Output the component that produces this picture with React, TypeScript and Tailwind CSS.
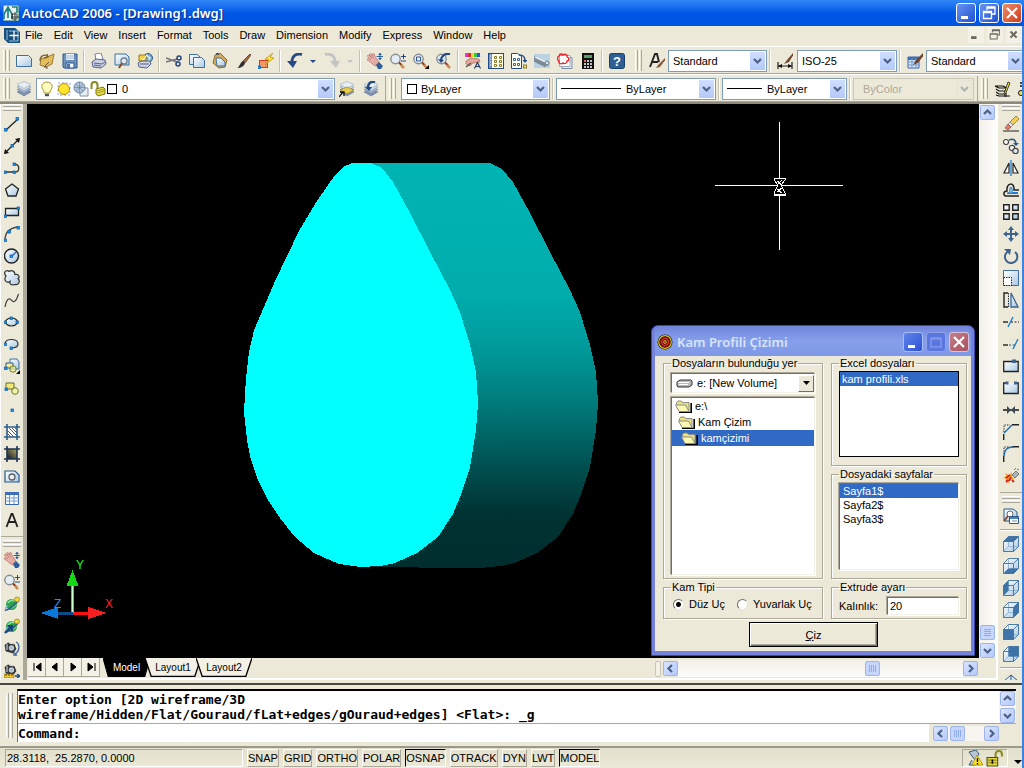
import React, { useState } from "react";
import type { ReactNode } from "react";

/* ---------- drawing helpers ---------- */

function Svg({ children, className = "size-4" }: { children: ReactNode; className?: string }) {
  return (
    <svg viewBox="0 0 16 16" className={`${className} shrink-0`} fill="none" aria-hidden="true">
      {children}
    </svg>
  );
}

function Node({ x, y }: { x: number; y: number }) {
  return <rect x={x - 1} y={y - 1} width="2.6" height="2.6" fill="#1e96f0" stroke="#0a5aa8" strokeWidth="0.7" />;
}

function Defs() {
  return (
    <svg className="absolute size-0" aria-hidden="true">
      <defs>
        <linearGradient id="glass" x1="0" y1="0" x2="1" y2="1">
          <stop offset="0" stopColor="#ffffff" />
          <stop offset="1" stopColor="#a9c8e2" />
        </linearGradient>
        <linearGradient id="camSide" x1="0" y1="163" x2="0" y2="567" gradientUnits="userSpaceOnUse">
          <stop offset="0" stopColor="#00b4b4" />
          <stop offset="0.33" stopColor="#00acac" />
          <stop offset="0.48" stopColor="#009696" />
          <stop offset="0.62" stopColor="#007474" />
          <stop offset="0.75" stopColor="#005050" />
          <stop offset="0.87" stopColor="#003232" />
          <stop offset="1" stopColor="#002e2e" />
        </linearGradient>
        <linearGradient id="dark" x1="0" y1="1" x2="1" y2="0">
          <stop offset="0" stopColor="#0b1633" />
          <stop offset="1" stopColor="#b5a55a" />
        </linearGradient>
      </defs>
    </svg>
  );
}

const page = (x: number, y: number) => (
  <path d={`M${x} ${y}h8l3 3v7h-11z`} fill="url(#glass)" stroke="#3f6f9c" />
);

const hand = (
  <>
    <path d="M5 7L1.500 3M6.500 6L3.500 1.500M8 6L6.500 1.500M5 9L1 6.500" stroke="#b8756d" strokeWidth="2.400" strokeLinecap="round" />
    <path d="M4 6l5-1 3 4-3 4c-3-1-5-3-6-5z" fill="#e3aaa2" stroke="#b8756d" strokeWidth=".8" />
    <path d="M5 7L1.500 3M6.500 6L3.500 1.500M8 6L6.500 1.500M5 9L1 6.500" stroke="#ecbab2" strokeWidth="1.200" strokeLinecap="round" />
    <path d="M9 12l3-3 4 4-2 3h-3z" fill="#2e5f98" />
    <path d="M13 0v7M9.500 3.500h6.500" stroke="#2e5f98" />
    <path d="M13 0l-2 2h4zM13 7l-2-2h4z" fill="#2e5f98" />
  </>
);

const lens = (
  <>
    <circle cx="5.500" cy="6" r="4.700" fill="#e4edf3" stroke="#878d94" strokeWidth="1.400" />
    <path d="M9 9.500l3 3" stroke="#8a3d1d" strokeWidth="2" />
    <path d="M11 12l3 3" stroke="#c98a54" strokeWidth="2.500" />
  </>
);

const stack = (
  <>
    <path d="M1 11l7-3 7 3-7 4z" fill="#7f93b0" stroke="#5c718f" strokeWidth="0.500" />
    <path d="M1 8.500l7-3 7 3-7 4z" fill="#a3b5cd" stroke="#5c718f" strokeWidth="0.500" />
    <path d="M1 6l7-3 7 3-7 4z" fill="#cfdbe8" stroke="#7487a2" strokeWidth="0.500" />
    <path d="M1 3.500l7-3 7 3-7 4z" fill="#e7eef4" stroke="#8b9db5" strokeWidth="0.500" />
  </>
);

const printer = (
  <>
    <path d="M4 1l6-1 2 6-7 2z" fill="#fff" stroke="#7680ab" />
    <path d="M1 9l4-3 9 1 1 4-5 4-8-1z" fill="#ccd1e3" stroke="#59638c" />
    <path d="M3 10l8 1 3-2M3 12l7 1" stroke="#59638c" />
  </>
);

const brush = (
  <>
    <path d="M15 1L8 8l2 2 6-8z" fill="#a46a41" stroke="#4d2c18" strokeWidth="0.700" />
    <path d="M8 8l2 2c-1 4-5 5-8 5 3-1 3-6 6-7z" fill="#2f2f33" />
  </>
);

const planet = (
  <>
    <circle cx="7.500" cy="8.500" r="5.500" fill="#2da04e" />
    <path d="M4 7c2-3 5-3 6-2M7 12c2-1 5-2 5-5" stroke="#8de09b" strokeWidth="1.700" />
    <path d="M1 14c2 1 12-6 13-10" stroke="#2b6490" strokeWidth="1.800" />
    <path d="M1 14c0-2 2-4 3-5" stroke="#7fb0cc" strokeWidth="1.200" />
    <circle cx="13" cy="3.500" r="2.500" fill="#edd33e" stroke="#9b7a13" strokeWidth="0.700" />
  </>
);

const camera = (
  <>
    <path d="M1 5l3-2 6 1 2 5-3 4-7-2z" fill="#34383e" stroke="#111" strokeWidth="0.600" />
    <circle cx="7.500" cy="8" r="2.300" fill="#a9bccb" stroke="#fff" strokeWidth="0.700" />
    <path d="M3 4v6M5 3l5 1" stroke="#dfe4e8" />
  </>
);

type Glyph = { label: string; art: ReactNode };

const cube = (face: string, label: string): Glyph => ({
  label,
  art: (
    <>
      <path d="M.5 5.500l5-5h10v10l-5 5H.500z" fill="url(#glass)" />
      <path d="M.5 15.500l5-5h10M5.500 10.500V.500" stroke="#8fb2d0" strokeWidth="0.900" />
      <path d={face} fill="#3f74a8" />
      <path d="M.5 5.500l5-5h10v10l-5 5H.500zM.500 5.500h10v10M10.500 5.500l5-5" stroke="#3d6f9f" strokeWidth="0.900" />
    </>
  ),
});

const SEP: Glyph = { label: "", art: null };

const standard: Glyph[] = [
  { label: "QNew", art: <path d="M.5 2.500h12l3 3v8H.500z" fill="url(#glass)" stroke="#3f6f9c" /> },
  {
    label: "Open",
    art: (
      <>
        <path d="M2 6l4-1 9-4-2 10-6 3-6-2z" fill="#e6bd5a" stroke="#9c7a31" />
        <path d="M1 8c0-5 4-7 7-5M8 1l1 3-4 1" stroke="#806329" strokeWidth="1.300" />
        <path d="M10 9l-5 5h3v2" stroke="#665230" />
      </>
    ),
  },
  {
    label: "Save",
    art: (
      <>
        <path d="M1 1h14v14H2l-1-1z" fill="#6c90bb" stroke="#2c568b" />
        <path d="M4 1h8v6H4z" fill="#e4eef8" />
        <path d="M4 3h8M4 5h8" stroke="#a7bdd5" />
        <path d="M4 10h8v5H4z" fill="#f4f6fa" stroke="#2c568b" />
        <path d="M5 11h3v4H5z" fill="#4b74a8" />
      </>
    ),
  },
  SEP,
  { label: "Plot", art: printer },
  {
    label: "Plot Preview",
    art: (
      <>
        <path d="M1 1h11l3 3v8H1z" fill="url(#glass)" stroke="#3f6f9c" />
        <circle cx="10" cy="8" r="3" fill="#dfe9ef" stroke="#72828e" strokeWidth="1.300" />
        <path d="M8 10l-3 5" stroke="#8d4926" strokeWidth="2" />
      </>
    ),
  },
  {
    label: "Publish",
    art: (
      <>
        <circle cx="11" cy="5" r="4.500" fill="#79acc8" stroke="#2d5c86" />
        <path d="M9 2l4 3-2 4" stroke="#d9f0ec" strokeWidth="1.500" />
        <path d="M2 2h7v6H2z" fill="#f6cd49" stroke="#a57b1c" />
        <path d="M4 5l2 2 4-5" stroke="#fff" />
        <path d="M1 10l3-2h9l1 3-4 4-8-1z" fill="#ccd1e3" stroke="#59638c" />
        <path d="M3 11h9" stroke="#59638c" />
      </>
    ),
  },
  SEP,
  {
    label: "Cut",
    art: (
      <>
        <path d="M0 5l11 4M0 9l11-3" stroke="#71757b" strokeWidth="1.400" />
        <circle cx="13" cy="5" r="2" stroke="#25427b" strokeWidth="1.500" />
        <circle cx="12" cy="11" r="2" stroke="#25427b" strokeWidth="1.500" />
      </>
    ),
  },
  { label: "Copy", art: <>{page(0.5, 1.5)}{page(4.5, 4.5)}</> },
  {
    label: "Paste",
    art: (
      <>
        <path d="M3 2l5-2 7 7-2 7-6 1-6-5z" fill="#d5ac5d" stroke="#91692b" />
        <path d="M4 5h5l4 4v4H5z" fill="url(#glass)" stroke="#3f6f9c" />
        <path d="M4 1h3" stroke="#555" strokeWidth="2" />
      </>
    ),
  },
  { label: "Match Properties", art: brush },
  {
    label: "Block Editor",
    art: (
      <>
        <rect x="1.500" y="7.500" width="8" height="7" fill="#f29863" stroke="#cf3a20" />
        <path d="M15 0L7 6l4 1-4 5 9-7-4-1z" fill="#ffe438" stroke="#b28a18" strokeWidth="0.700" />
        <Node x={1} y={14} />
      </>
    ),
  },
  SEP,
  { label: "Undo", art: <><path d="M15 1.500C9 0 5 3 5 9" stroke="#234a84" strokeWidth="2.800" /><path d="M0 8h10l-4 7z" fill="#234a84" /></> },
  { label: "Undo list", art: <path d="M5 7h6l-3 3z" fill="#234a84" /> },
  { label: "Redo", art: <><path d="M1 1.500c6-1.500 10 1.500 10 7.500" stroke="#c2c3c3" strokeWidth="2.800" /><path d="M6 8h10l-4 7z" fill="#c2c3c3" /></> },
  { label: "Redo list", art: <path d="M5 7h6l-3 3z" fill="#c2c3c3" /> },
  SEP,
  { label: "Pan Realtime", art: hand },
  { label: "Zoom Realtime", art: <>{lens}<path d="M13.500 1v5M11 3.500h5M11 8h5" stroke="#234a84" /></> },
  { label: "Zoom Window", art: <>{lens}<path d="M3.500 4h4v4h-4z" stroke="#2c568b" /><path d="M16 12v4h-4z" fill="#000" /></> },
  { label: "Zoom Previous", art: <>{lens}<path d="M14 1C9 0 5 3 5 8" stroke="#234a84" strokeWidth="2.200" /><path d="M2 6l3 4 3-3z" fill="#234a84" /></> },
  SEP,
  {
    label: "Properties",
    art: (
      <>
        <path d="M0 0h3v4H0z" fill="#e23ad0" /><path d="M3 0h3v4H3z" fill="#e32a26" /><path d="M6 0h3v4H6z" fill="#f2df22" />
        <path d="M9 0h3v4H9z" fill="#33c93c" /><path d="M12 0h3v4h-3z" fill="#2a55dd" />
        <path d="M1 8l5-3 8 1 1 3-7 1-3 3-4-2z" fill="#e1a79d" stroke="#a86a61" strokeWidth="0.700" />
        <path d="M1 14l5-4" stroke="#555" strokeWidth="1.500" />
        <path d="M9.500 15.500l3-6 3 6M10.500 13.500h4" stroke="#1f3b66" strokeWidth="1.200" />
      </>
    ),
  },
  {
    label: "DesignCenter",
    art: (
      <>
        <rect x=".5" y=".5" width="15" height="15" fill="#fffef2" stroke="#234a84" />
        <path d="M1 1h3v14H1z" fill="#6f95c0" />
        <path d="M2 3h1M2 6h1M2 9h1M2 12h1" stroke="#fff" />
        <path d="M6.500 3.500h2v2h-2zM11.500 3.500h2v2h-2zM6.500 7.500h2v2h-2zM11.500 7.500h2v2h-2zM6.500 11.500h2v2h-2zM11.500 11.500h2v2h-2z" stroke="#8a7a24" />
      </>
    ),
  },
  {
    label: "Tool Palettes",
    art: (
      <>
        <path d="M.5.5h6l4 3v12H.500z" fill="#fffef2" stroke="#234a84" />
        <path d="M2.500 5.500h2v2h-2zM6.500 5.500h2v2h-2zM2.500 10.500h2v2h-2zM6.500 10.500h2v2h-2z" stroke="#3a659c" />
        <path d="M8 2c5 0 6 2 6 6" stroke="#234a84" strokeWidth="1.600" /><path d="M11.500 7h5L14 10z" fill="#234a84" />
        <rect x="12.500" y="12" width="3" height="3" fill="#f5e58a" stroke="#8a7a24" />
      </>
    ),
  },
  {
    label: "Sheet Set Manager",
    art: (
      <>
        <path d="M0 1h16v14H0z" fill="#b9d3e3" /><path d="M0 4l14 8M0 7l12 6" stroke="#7d8a94" strokeWidth="3" />
        <path d="M1 4l13 6" stroke="#e9eef0" strokeWidth="1.500" /><circle cx="13" cy="10" r="2" fill="#dfe5e8" stroke="#6b7780" />
      </>
    ),
  },
  {
    label: "Markup Set Manager",
    art: (
      <>
        <path d="M5 4.500h10v11H5z" fill="#e3ecf6" stroke="#7b8ea8" /><path d="M2.500 2.500h10.500v11H2.500z" fill="#fff" stroke="#9caabd" />
        <path d="M2 3c1-3 3-2 4-1 2-2 5 0 4 2 3 1 2 4 0 4 0 3-3 3-4 2-2 2-5 0-4-2-2-1-2-4 0-5z" stroke="#e8222b" strokeWidth="1.300" />
      </>
    ),
  },
  {
    label: "QuickCalc",
    art: (
      <>
        <rect x="2" y="0" width="12" height="16" fill="#111" /><rect x="4" y="2" width="8" height="3" fill="#5c9c68" />
        <path d="M4 8h8M4 11h8M4 14h8" stroke="#fff" strokeWidth="1.600" strokeDasharray="2 1" />
        <path d="M4 8h2" stroke="#e44" strokeWidth="1.600" />
      </>
    ),
  },
  SEP,
  {
    label: "Help",
    art: (
      <>
        <rect x=".5" y=".5" width="15" height="15" rx="2" fill="#2d5f94" stroke="#173f6d" />
        <text x="8" y="13" textAnchor="middle" fontSize="13" fontWeight="700" fill="#fff" fontFamily="Liberation Sans, sans-serif">?</text>
      </>
    ),
  },
];

const draw: Glyph[] = [
  { label: "Line", art: <><path d="M2 14L14 3" stroke="#222" strokeWidth="1.300" /><Node x={1.5} y={13.5} /><Node x={13} y={2.500} /></> },
  { label: "Construction Line", art: <><path d="M1 15L15 1" stroke="#222" strokeWidth="1.300" /><path d="M0 16l1-5 4 4zM16 0l-1 5-4-4z" fill="#111" /><Node x={8} y={7.500} /></> },
  { label: "Polyline", art: <><path d="M1 12h10c5 0 5-7 0-8" stroke="#333" strokeWidth="1.300" /><Node x={1} y={12} /><Node x={10} y={12} /><Node x={10} y={4} /></> },
  { label: "Polygon", art: <path d="M8 2l6.500 5-2.500 7H4L1.500 7z" fill="url(#glass)" stroke="#222" strokeWidth="1.300" /> },
  { label: "Rectangle", art: <><path d="M1.500 4.500h13v7h-13z" fill="url(#glass)" stroke="#222" strokeWidth="1.300" /><Node x={1} y={12} /><Node x={14} y={4} /></> },
  { label: "Arc", art: <><path d="M1 14C1 7 5 2 14 1" stroke="#444" strokeWidth="1.300" /><Node x={1} y={14} /><Node x={5} y={5.500} /><Node x={14} y={1.500} /></> },
  { label: "Circle", art: <><circle cx="7.500" cy="8" r="7" fill="url(#glass)" stroke="#222" strokeWidth="1.400" /><path d="M8 8l4-4" stroke="#1e6eb4" strokeWidth="1.400" /><Node x={7} y={8} /></> },
  { label: "Revision Cloud", art: <path d="M2 6C-1 3 2-1 5 1.500c3-2 6 0 6 3 4-1 5 3 3 4 3 3 0 7-3 6-3 1-6 0-5-3-3 2-7-1-4-5.500z" fill="url(#glass)" stroke="#333" strokeWidth="1.200" /> },
  { label: "Spline", art: <path d="M1 15c1-6 3-9 5-8s2 4 5 2c3-2 2-6 4-7" stroke="#444" strokeWidth="1.200" /> },
  { label: "Ellipse", art: <><ellipse cx="7.500" cy="8" rx="6" ry="4" fill="url(#glass)" stroke="#222" strokeWidth="1.200" /><Node x={1} y={8} /><Node x={7} y={4} /><Node x={13} y={8} /></> },
  { label: "Ellipse Arc", art: <><path d="M1 8c0-6 13-6 13 0 0 3-3 4-7 4" fill="url(#glass)" stroke="#333" strokeWidth="1.200" /><Node x={1} y={8} /><Node x={7} y={12} /></> },
  { label: "Insert Block", art: <><path d="M6 1h7l2 3v7H6z" fill="url(#glass)" stroke="#3f6f9c" /><path d="M2 5h7v5H2z" fill="#f6ee9d" stroke="#27598c" /><circle cx="9" cy="11" r="3.200" fill="#f6ee9d" fillOpacity=".7" stroke="#6c7c28" /><Node x={1.500} y={10} /><path d="M16 12v4h-4z" fill="#000" /></> },
  { label: "Make Block", art: <><path d="M2 3h8v6H2z" fill="#f4e877" stroke="#5c6a2a" /><circle cx="11" cy="11" r="3.300" fill="#f6ee9d" fillOpacity=".7" stroke="#6c7c28" /><Node x={2} y={9} /></> },
  { label: "Point", art: <Node x={8} y={8} /> },
  { label: "Hatch", art: <><path d="M3 3h10v10H3z" fill="#fff" /><path d="M3 6l7 7M3 9l4 4M5 4l8 8M8 4l5 5M11 4l2 2" stroke="#333" strokeWidth=".8" /><path d="M0 3h16M0 13h16M3 0v16M13 0v16" stroke="#2c5f8c" strokeWidth="1.600" /></> },
  { label: "Gradient", art: <><path d="M3 3h10v10H3z" fill="url(#dark)" /><path d="M0 3h16M0 13h16M3 0v16M13 0v16" stroke="#1c3550" strokeWidth="1.600" /></> },
  { label: "Region", art: <><path d="M1 3h10l4 4v7H1z" fill="url(#glass)" stroke="#27598c" strokeWidth="1.200" /><circle cx="8" cy="9" r="3" fill="#eee" stroke="#56606b" strokeWidth="1.300" /></> },
  { label: "Table", art: <><path d="M1.500 2.500h13v12h-13z" fill="#fff" stroke="#3665ad" /><path d="M1 2h14v3H1z" fill="#3d6eb8" /><path d="M5.500 5v9M10 5v9M1 8h14M1 11h14" stroke="#6f97cf" /></> },
  { label: "Multiline Text", art: <path d="M2.500 15L7.500 2h1l5 13M4.500 10h7" stroke="#222" strokeWidth="1.800" /> },
];

const view3d: Glyph[] = [
  { label: "3D Pan", art: hand },
  { label: "3D Zoom", art: <>{lens}<path d="M13.500 1v5M11 3.500h5M11 8h5" stroke="#234a84" /></> },
  { label: "3D Orbit", art: planet },
  { label: "3D Continuous Orbit", art: <>{planet}<path d="M1 15l7-7M4 8h4v5" stroke="#17457d" strokeWidth="2" /></> },
  { label: "3D Swivel", art: <>{camera}<path d="M12 2c4 2 4 9-1 12M10 12v3h3" stroke="#3b608d" strokeWidth="1.300" /></> },
  { label: "3D Adjust Distance", art: <>{camera}<path d="M0 12h10v4H0z" fill="#f2c52c" stroke="#745b12" strokeWidth=".6" /><path d="M2 12v2M5 12v2M8 12v2" stroke="#333" strokeWidth=".8" /><path d="M11 14h5M13 12l3 2-3 2" stroke="#234a84" strokeWidth="1.300" /></> },
];

const modify: Glyph[] = [
  { label: "Erase", art: <><path d="M0 15h16" stroke="#222" /><path d="M7 6l6-6 3 3-6 6z" fill="#f3cf53" stroke="#7a621c" strokeWidth=".7" /><path d="M7 6l3 3-2 2-3-3z" fill="#e9eef3" stroke="#667" strokeWidth=".6" /><path d="M5 8l3 3-3 3-3-2z" fill="#e0786c" stroke="#7c3a33" strokeWidth=".6" /></> },
  { label: "Copy Object", art: <><circle cx="3" cy="4" r="2.500" fill="#fff" stroke="#444" strokeWidth="1.200" /><circle cx="9" cy="10" r="2.700" fill="#fff" stroke="#444" strokeWidth="1.200" /><circle cx="12.500" cy="13" r="2.700" fill="#dde8f1" stroke="#444" strokeWidth="1.200" /><path d="M6 2c4-2 7 0 7 4" stroke="#27598c" strokeWidth="1.600" /><path d="M10 5h6l-3 3z" fill="#27598c" /></> },
  { label: "Mirror", art: <><path d="M8 0v16" stroke="#1e7fd0" strokeWidth="1.300" /><path d="M6 3v10H1zM10 3v10h5z" fill="#fff" stroke="#222" strokeWidth="1.200" /></> },
  { label: "Offset", art: <><path d="M16 14H3c-3 0-3-5 1-5C3 0 12 0 11 8h5" stroke="#222" strokeWidth="1.500" /><path d="M15 11.500H5c-1 0-1-1 2-1-1-7 3-7 2 0h6" stroke="#1e7fd0" strokeWidth="1.200" /></> },
  { label: "Array", art: <path d="M.7.7h5.500v5.500H.700zM9.700.700h5.500v5.500H9.700zM.700 9.700h5.500v5.500H.700zM9.700 9.700h5.500v5.500H9.700z" fill="url(#glass)" stroke="#222" strokeWidth="1.400" /> },
  { label: "Move", art: <><path d="M8 2v12M2 8h12" stroke="#3c648e" strokeWidth="2" /><path d="M8 0l3 4H5zM8 16l3-4H5zM0 8l4 3V5zM16 8l-4 3V5z" fill="#3c648e" /></> },
  { label: "Rotate", art: <><path d="M5 3.500A6.200 6.200 0 1 0 12 4" stroke="#3c648e" strokeWidth="2" /><path d="M1 1l7 0-1 6z" fill="#3c648e" /></> },
  { label: "Scale", art: <><path d="M.5.5h15v15H.500z" fill="url(#glass)" stroke="#3f6f9c" /><path d="M.5 7.500h8v8h-8z" fill="#fff" stroke="#222" strokeDasharray="1.500 1" /></> },
  { label: "Stretch", art: <><path d="M5 1h2l8 14H5z" fill="url(#glass)" /><path d="M5 1H1v14h4" stroke="#222" strokeWidth="1.400" /><path d="M5.500 1v14" stroke="#222" strokeDasharray="1.500 1" /><path d="M8 1l7 14H8z" stroke="#3c648e" strokeWidth="1.300" /></> },
  { label: "Trim", art: <><path d="M0 8h5" stroke="#222" strokeWidth="1.400" /><path d="M5 13L10 3" stroke="#1e7fd0" strokeWidth="1.400" /><path d="M8 8h8" stroke="#222" strokeDasharray="2 1.500" /></> },
  { label: "Extend", art: <><path d="M0 9h5" stroke="#222" strokeWidth="1.400" /><path d="M10 13L15 3" stroke="#1e7fd0" strokeWidth="1.400" /><path d="M6 9h6" stroke="#27598c" strokeDasharray="2 1.500" /></> },
  { label: "Break at Point", art: <><path d="M.7 3.500h14.500v10H.700z" fill="url(#glass)" stroke="#222" strokeWidth="1.300" /><rect x="9" y="1.500" width="4" height="3.500" fill="#3c648e" /></> },
  { label: "Break", art: <><path d="M3 3H.700v10.500h14.500V3H13" fill="url(#glass)" stroke="#222" strokeWidth="1.300" /><path d="M2.500 1.500h3v3h-3zM11 1.500h3v3h-3z" fill="#3c648e" /></> },
  { label: "Join", art: <><path d="M0 8h16" stroke="#222" strokeWidth="1.600" /><path d="M4 4l4 4-4 4zM12 4L8 8l4 4z" fill="#3a4652" /></> },
  { label: "Chamfer", art: <><path d="M.7 16v-6M9 .700h7" stroke="#222" strokeWidth="1.400" /><path d="M1 8V1h6" stroke="#222" strokeDasharray="1.300 1.200" /><path d="M1 9l8-8" stroke="#1e6eb4" strokeWidth="1.400" /></> },
  { label: "Fillet", art: <><path d="M.7 16v-6M9 .700h7" stroke="#222" strokeWidth="1.400" /><path d="M1 8V1h6" stroke="#222" strokeDasharray="1.300 1.200" /><path d="M1 10c0-5 3-9 9-9" stroke="#1e6eb4" strokeWidth="1.600" /></> },
  { label: "Explode", art: <><path d="M9 7l4-4 3 3-4 4z" fill="#aab4bd" stroke="#555" strokeWidth=".7" /><path d="M11 2l2-2M14 1l2 1" stroke="#777" /><path d="M2 5l4 2 3-3 0 5 3 2-5 1-2 4-2-5-3-1 3-2z" fill="#f3a92a" /><path d="M3 10l4-3M6 13l2-4M3 14l2-2M9 12l2 2" stroke="#d81f1f" strokeWidth="1.800" /></> },
];

const views: Glyph[] = [
  { label: "Named Views", art: <><path d="M1 1h9l4 3v9H1z" fill="url(#glass)" stroke="#27598c" /><circle cx="7" cy="6" r="3" fill="#fff" stroke="#666" /><path d="M5 8l-4 5" stroke="#8b4a2a" strokeWidth="2" /><path d="M6.500 8.500h9v7h-9z" fill="#fff" stroke="#27598c" /><path d="M7 9h8v2H7z" fill="#4d7fc0" /><path d="M9 13h5" stroke="#789" /></> },
  SEP,
  cube("M.5 5.500l5-5h10l-5 5z", "Top View"),
  cube("M.5 15.500l5-5h10l-5 5z", "Bottom View"),
  cube("M.5 5.500l5-5v10l-5 5z", "Left View"),
  cube("M10.500 5.500l5-5v10l-5 5z", "Right View"),
  cube("M.5 5.500h10v10H.500z", "Front View"),
  cube("M5.500.5h10v10h-10z", "Back View"),
  SEP,
  { label: "SW Isometric", art: <path d="M8 1l7 6v7l-7 3-7-3V7zM8 1v6M1 7l7 3 7-3" fill="url(#glass)" stroke="#27598c" /> },
];

/* ---------- shared chrome ---------- */

function ToolButton({ glyph, size }: { glyph: Glyph; size: string }) {
  return (
    <button type="button" title={glyph.label} aria-label={glyph.label} className={`flex shrink-0 items-center justify-center ${size}`}>
      <Svg>{glyph.art}</Svg>
    </button>
  );
}

function Grip() {
  return (
    <div className="flex shrink-0 gap-px self-stretch py-0.5">
      <div className="w-[3px] border-r border-l border-l-white border-r-[#aca899]" />
      <div className="w-[3px] border-r border-l border-l-white border-r-[#aca899]" />
    </div>
  );
}

function GripFlat() {
  return (
    <div className="flex h-[9px] shrink-0 flex-col gap-px px-0.5">
      <div className="h-[3px] border-t border-b border-t-white border-b-[#aca899]" />
      <div className="h-[3px] border-t border-b border-t-white border-b-[#aca899]" />
    </div>
  );
}

function Divider() {
  return <div className="mx-[2px] h-[22px] w-[2px] shrink-0 border-r border-r-white bg-[#c5c2b2]" />;
}

function Chevron({ dir, className = "size-[9px]" }: { dir: "up" | "down" | "left" | "right"; className?: string }) {
  const d = { down: "M1 3l3.500 3.500L8 3", up: "M1 6l3.500-3.500L8 6", left: "M6 1L2.500 4.500 6 8", right: "M3 1l3.500 3.500L3 8" }[dir];
  return (
    <svg viewBox="0 0 9 9" className={className} fill="none" aria-hidden="true">
      <path d={d} stroke="#4d6185" strokeWidth="2.200" />
    </svg>
  );
}

function ScrollButton({ dir }: { dir: "up" | "down" | "left" | "right" }) {
  return (
    <button type="button" aria-label={`Scroll ${dir}`} className="flex size-[15px] shrink-0 items-center justify-center rounded-[2px] border border-[#9db5ee] bg-linear-to-br from-[#dbe5ff] to-[#b3c8fb]">
      <Chevron dir={dir} />
    </button>
  );
}

function Thumb({ vertical = false }: { vertical?: boolean }) {
  return (
    <div className={`flex size-[15px] shrink-0 items-center justify-center gap-px rounded-[2px] border border-[#9db5ee] bg-[#c6d6fd] ${vertical ? "flex-col" : ""}`}>
      {[0, 1, 2, 3].map((i) => (
        <div key={i} className={vertical ? "h-px w-[7px] bg-[#8fabea]" : "h-[7px] w-px bg-[#8fabea]"} />
      ))}
    </div>
  );
}

function Combo({ label, options, width, pad = "pl-1", lead, disabled = false }: { label: string; options: string[]; width: string; pad?: string; lead?: ReactNode; disabled?: boolean }) {
  return (
    <div className={`grid h-[22px] shrink-0 items-center ${width}`}>
      <select
        aria-label={label}
        disabled={disabled}
        className={`col-start-1 row-start-1 h-full w-full appearance-none border text-[11px] leading-4 ${pad} ${disabled ? "border-[#c9c7ba] bg-[#ece9d8] text-[#aca899]" : "border-[#7f9db9] bg-white text-black"}`}
      >
        {options.map((o) => (
          <option key={o}>{o}</option>
        ))}
      </select>
      {lead && <div className="pointer-events-none col-start-1 row-start-1 flex items-center justify-self-start">{lead}</div>}
      <div className={`pointer-events-none col-start-1 row-start-1 mr-0.5 flex h-[18px] w-[15px] items-center justify-center justify-self-end ${disabled ? "border border-[#dddbcd] opacity-40" : "bg-linear-to-b from-[#d0defe] to-[#b4c9fa]"}`}>
        <Chevron dir="down" />
      </div>
    </div>
  );
}

/* ---------- title and menus ---------- */

function TitleBar() {
  return (
    <header className="flex h-[26px] shrink-0 items-center bg-linear-to-b from-[#2f86f5] via-[#0058e6] to-[#0054e0] pr-0.5 pl-[3px]">
      <Svg className="size-4">
        <path d="M0 0h16v16H0z" fill="#e8f0ee" stroke="#156a68" />
        <path d="M1 14V9l4-7 4 7v5M5 4v9M9 2h5v6" stroke="#1d7f7c" strokeWidth="1.600" />
        <path d="M9 9h5v5H9zM12 7v9M8 12h8" stroke="#222" strokeWidth=".8" />
      </Svg>
      <h1 className="ml-[3px] flex-1 truncate font-['Noto_Sans'] text-[13px] leading-5 font-semibold text-white [text-shadow:1px_1px_1px_#0b2d8a]">
        AutoCAD 2006 - [Drawing1.dwg]
      </h1>
      <div className="flex gap-[3px]">
        {["Minimize", "Restore"].map((name) => (
          <button key={name} type="button" aria-label={name} className="flex size-5 items-center justify-center rounded-[3px] border border-white bg-linear-to-br from-[#6a93f0] to-[#1f4fd2]">
            <Svg>
              {name === "Minimize" ? (
                <path d="M3 11h7v3H3z" fill="#fff" />
              ) : (
                <path d="M6 5V2h8v7h-3M6 3h8M2.500 6.500h8v7h-8zM2.500 7.500h8" stroke="#fff" strokeWidth="1.300" />
              )}
            </Svg>
          </button>
        ))}
        <button type="button" aria-label="Close" className="flex size-5 items-center justify-center rounded-[3px] border border-white bg-linear-to-br from-[#ee8a68] to-[#cf3a14]">
          <Svg>
            <path d="M3 3l10 10M13 3L3 13" stroke="#fff" strokeWidth="2.200" />
          </Svg>
        </button>
      </div>
    </header>
  );
}

function MenuBar() {
  const menus = ["File", "Edit", "View", "Insert", "Format", "Tools", "Draw", "Dimension", "Modify", "Express", "Window", "Help"];
  return (
    <nav aria-label="Menu bar" className="flex h-5 shrink-0 items-center pb-0.5 pl-1">
      <Svg className="mr-[5px] size-4">
        <path d="M0 1h11l5 4v11H4L0 12z" fill="#174f7d" />
        <path d="M3 3v10M5 4h9v10H5" stroke="#8fc3df" />
        <path d="M10 4v9M5.500 8.500h9" stroke="#fff" strokeWidth="1.300" />
      </Svg>
      <div className="flex flex-1 gap-[11px]">
        {menus.map((m) => (
          <button key={m} type="button" className="text-[11px] leading-4">{m}</button>
        ))}
      </div>
      <div className="flex gap-[3px]">
        {["M3 10h5v2H3z", "M5 5V2h8v6h-2M5 3h8M2.500 6.500h8v6h-8zM2.500 7h8", "M4 4l7 7M11 4l-7 7"].map((d, i) => (
          <button key={d} type="button" aria-label={["Minimize drawing", "Restore drawing", "Close drawing"][i]} className="flex size-4 items-center justify-center bg-[#f3f1e6]">
            <Svg className="size-[14px]">
              <path d={d} stroke="#6b695f" strokeWidth={i === 2 ? 2.4 : 1.2} fill={i === 0 ? "#6b695f" : "none"} />
            </Svg>
          </button>
        ))}
      </div>
    </nav>
  );
}

/* ---------- horizontal toolbars ---------- */

const rowClass = "flex h-7 shrink-0 items-center overflow-hidden border-t border-b border-t-white border-b-[#aca899] pt-px pl-[3px]";

function StandardRow() {
  return (
    <div className={rowClass}>
      <Grip />
      <div className="flex items-center pl-[2px]">
        {standard.map((g, i) =>
          g.art === null ? <Divider key={i} /> : <ToolButton key={i} glyph={g} size={g.label.endsWith("list") ? "h-6 w-[14px]" : "h-6 w-[23px]"} />
        )}
      </div>
      <div className="mr-[3px] ml-1 w-px self-stretch bg-[#aca899]" />
      <Grip />
      <ToolButton
        size="ml-[3px] h-6 w-[23px]"
        glyph={{ label: "Text Style", art: <><path d="M1 14L6 1h2l2 8M3 9h6" stroke="#222" strokeWidth="1.900" /><path d="M16 5L9 12l-2 3 4-1 6-8z" fill="#8a5a3a" /></> }}
      />
      <Combo label="Text style" options={["Standard"]} width="w-[99px]" />
      <Divider />
      <ToolButton
        size="h-6 w-6"
        glyph={{ label: "Dimension Style", art: <><path d="M1 9v7M15 9v7M1 13h14" stroke="#222" strokeWidth="1.200" /><path d="M1 13l4-2v4zM15 13l-4-2v4z" fill="#111" /><path d="M16 0L10 7l-3 4 5-2 5-8z" fill="#6e4730" /></> }}
      />
      <Combo label="Dimension style" options={["ISO-25"]} width="w-[100px]" />
      <Divider />
      <ToolButton
        size="h-6 w-[23px]"
        glyph={{ label: "Table Style", art: <><path d="M1 4h11v11H1z" fill="#dbe8f8" stroke="#3665ad" /><path d="M1 4h11v3H1z" fill="#3d6eb8" /><path d="M5 5v10M9 5v10M1 9h11M1 12h11" stroke="#6f97cf" /><path d="M16 0L9 7l-3 5 5-2 6-8z" fill="#6e4730" /></> }}
      />
      <Combo label="Table style" options={["Standard"]} width="w-[99px]" />
    </div>
  );
}

function LayerRow() {
  return (
    <div className={rowClass}>
      <Grip />
      <ToolButton size="ml-[2px] h-6 w-6" glyph={{ label: "Layer Properties Manager", art: stack }} />
      <Combo
        label="Layer"
        options={["0"]}
        width="w-[299px]"
        pad="pl-[85px]"
        lead={
          <span className="flex items-center gap-px pl-[3px]">
            <Svg>
              <path d="M5 10C1 6 3 1 8 1s7 5 3 9v2H5z" fill="#fffbc0" stroke="#a79a3a" />
              <path d="M6 14h4" stroke="#555" strokeWidth="2.500" />
            </Svg>
            <Svg>
              <path d="M2 2h12v12H2z" stroke="#8da4bf" strokeDasharray="2 2" />
              <circle cx="8" cy="8" r="5.500" fill="#ffe52e" stroke="#b28f14" />
            </Svg>
            <Svg>
              <path d="M7 7h8v8H7z" fill="#e8edf2" stroke="#8492a4" />
              <circle cx="6.500" cy="6.500" r="5.500" fill="#b5c5d6" stroke="#6b84a3" />
              <path d="M6.500 1v11M1 6.500h11M3 3l7 7M10 3l-7 7" stroke="#6b84a3" strokeWidth=".7" />
            </Svg>
            <Svg>
              <path d="M1.500 8V4c0-4 6-4 6 0v5" stroke="#8a8b1e" strokeWidth="2" />
              <path d="M6 8l7-2 2 2v5l-7 2-2-2z" fill="#e8dc46" stroke="#7a7718" />
              <path d="M7 10l7-2M7 12l7-2" stroke="#a69b24" />
            </Svg>
            <span className="size-[10px] border border-black bg-white" />
          </span>
        }
      />
      <ToolButton size="h-6 w-6" glyph={{ label: "Make Object's Layer Current", art: <>{stack}<path d="M1 9l7-3 7 3-7 4z" fill="#e6cc4c" stroke="#8d7a20" strokeWidth=".6" /><path d="M0 16l4-5M1 11h4v4" stroke="#111" strokeWidth="1.300" /></> }} />
      <ToolButton size="h-6 w-[23px]" glyph={{ label: "Layer Previous", art: <>{stack}<path d="M12 1c-5-1-7 2-7 6" stroke="#234a84" strokeWidth="2.400" /><path d="M2 6h7l-3 4z" fill="#234a84" /></> }} />
      <div className="mr-[3px] ml-[3px] w-px shrink-0 self-stretch bg-[#aca899]" />
      <Grip />
      <div className="w-[5px] shrink-0" />
      <Combo label="Color" options={["ByLayer"]} width="w-[149px]" pad="pl-[19px]" lead={<span className="ml-[6px] size-[10px] border border-black bg-white" />} />
      <Divider />
      <Combo label="Linetype" options={["ByLayer"]} width="w-[160px]" pad="pl-[69px]" lead={<span className="ml-[5px] h-px w-[60px] bg-black" />} />
      <Divider />
      <Combo label="Lineweight" options={["ByLayer"]} width="w-[125px]" pad="pl-[44px]" lead={<span className="ml-[5px] h-px w-[35px] bg-black" />} />
      <Divider />
      <Combo label="Plot style" options={["ByColor"]} width="w-[121px]" pad="pl-[9px]" disabled />
      <div className="mr-[3px] ml-[3px] w-px shrink-0 self-stretch bg-[#aca899]" />
      <Grip />
      <ToolButton size="ml-[3px] h-6 w-[23px]" glyph={{ label: "Express Layers", art: <><path d="M0 5h8l4 2H4zM1 8l3 2h8M1 11l3 2h8M1 14l3 1h8" stroke="#111" strokeWidth="1.200" /><path d="M13 1l2 1-5 12-1-1z" fill="#f4ec3c" stroke="#111" strokeWidth=".8" /><path d="M9 15h6" stroke="#111" /></> }} />
      <ToolButton size="h-6 w-[23px]" glyph={{ label: "Layer Walk", art: <><path d="M2 2h11M2 5h11M4 8h9" stroke="#111" strokeWidth="1.500" /><circle cx="3" cy="12" r="2.500" fill="#f4ec3c" stroke="#111" /></> }} />
    </div>
  );
}

/* ---------- vertical toolbars ---------- */

function ToolColumn({ groups, className }: { groups: Glyph[][]; className: string }) {
  return (
    <aside className={`flex shrink-0 flex-col overflow-hidden ${className}`}>
      {groups.map((group, gi) => (
        <div key={gi} className={`flex flex-col ${gi > 0 ? "mt-[5px] border-t border-[#aca899] pt-[3px]" : ""}`}>
          <GripFlat />
          {group.map((g, i) =>
            g.art === null ? <div key={i} className="my-[2px] h-[2px] shrink-0 border-b border-b-white bg-[#aca899]" /> : <ToolButton key={i} glyph={g} size="h-[22px] w-full" />
          )}
        </div>
      ))}
    </aside>
  );
}

/* ---------- drawing area ---------- */

const front =
  "352,163 343,167 335,175 317,201 300,229 275,281 264,307 254,330 249,352 246,378 244,412 247,440 251,460 258,480 268,500 280,518 295,537 314,553 339,564 360,567 380,566 395,563 417,553 438,537 453,514 462,492 470,467 476,430 478,403 476,372 470,345 460,312 450,290 430,252 410,213 393,182 382,168 371,163";
const side =
  "352,163 490,163 502,169 513,182 530,213 550,252 570,290 580,312 590,345 596,372 598,403 596,430 590,467 582,492 573,514 558,537 537,553 515,563 500,566 480,568 358,567";

function Canvas() {
  return (
    <div className="relative min-h-0 flex-1 overflow-hidden bg-black">
      <svg viewBox="27 104 952 554" className="h-[554px] w-[952px] max-w-none" role="img" aria-label="Cam solid in the model view" shapeRendering="crispEdges">
        <polygon points={side} fill="url(#camSide)" />
        <polygon points={front} fill="#00ffff" />
        <path d="M715 185.500H843M779.500 122v128" stroke="#ffffff" />
        <path d="M774 178h11v2l-4 5 4 8v2h-11v-2l4-8-4-5z" fill="#000" stroke="#fff" />
        <path d="M774 178.500h11M774 194.500h11M777 181l5 4M777 192l5-4M777 189l5 4M778 184l4-4" stroke="#fff" strokeWidth="1.300" />
        <path d="M73 613H90" stroke="#ff1010" strokeWidth="3" />
        <path d="M88 607l18 6-18 6z" fill="#f42020" />
        <path d="M72.500 613V586" stroke="#35e035" strokeWidth="3" />
        <path d="M72.500 586v26" stroke="#c8ffc8" />
        <path d="M72.500 570l6 16h-12z" fill="#14d814" />
        <path d="M73 613H58" stroke="#0b4b86" strokeWidth="3" />
        <path d="M41 613l17-6v12z" fill="#0a78d8" />
        <g fontFamily="Liberation Sans, sans-serif" fontSize="12">
          <text x="105" y="608" fill="#ff2020">X</text>
          <text x="76" y="569" fill="#20ff20">Y</text>
          <text x="54" y="608" fill="#2090ff">Z</text>
        </g>
      </svg>
      <CamDialog />
    </div>
  );
}

const sunken = "border border-t-[#716f64] border-l-[#716f64] border-r-[#f4f2e8] border-b-[#f4f2e8] bg-white shadow-[-1px_-1px_0_#aca899,1px_1px_0_#fff]";
const group = "min-w-0 border border-[#aca899] px-[7px] shadow-[1px_1px_0_#fff,inset_1px_1px_0_#fff]";
const legend = "px-px text-[11px] leading-[13px]";

function Folder() {
  return (
    <svg viewBox="0 0 17 13" className="h-[13px] w-[17px] shrink-0" aria-hidden="true">
      <path d="M4 12.500h12.200V3" stroke="#000" strokeWidth="1.600" fill="none" />
      <path d="M1.500 4V2.500l1.500-1.500h3l2 1.500h6V11H4z" fill="#e9e37a" stroke="#8b8b8b" />
      <path d="M.5 5h10l3.500 6.500H4z" fill="#fbf8b4" stroke="#8b8b8b" />
    </svg>
  );
}

function CamDialog() {
  const [sheet, setSheet] = useState("Sayfa1$");
  const [tip, setTip] = useState("duz");
  return (
    <section role="dialog" aria-label="Kam Profili Çizimi" className="absolute right-1 bottom-0.5 w-[324px] rounded-t-[7px] border border-[#3a48b4] bg-[#7482dc] px-[3px] pb-1">
      <div className="flex h-[30px] items-center rounded-t-[6px] bg-linear-to-b from-[#7285da] via-[#86a0ec] to-[#7f98e6] px-[2px] pt-px">
        <Svg className="size-4">
          <circle cx="8" cy="8" r="7.500" fill="#111" />
          <circle cx="8" cy="8" r="6.300" stroke="#e6c21e" strokeWidth="1.200" />
          <circle cx="8" cy="8" r="4.600" fill="#e8261c" stroke="#8d0e0a" />
          <circle cx="8" cy="8" r="2.300" fill="#f3d72c" stroke="#111" />
          <circle cx="8" cy="8" r="1" fill="#d81818" />
        </Svg>
        <h2 className="ml-1 flex-1 font-['Noto_Sans'] text-[13px] leading-5 font-semibold text-[#d9e3fb]">Kam Profili Çizimi</h2>
        <div className="flex gap-[3px]">
          <button type="button" aria-label="Minimize dialog" className="flex size-5 items-center justify-center rounded-[3px] border border-[#a9bcf4] bg-linear-to-br from-[#5f83ec] to-[#2f52d4]">
            <Svg><path d="M3 11h7v3H3z" fill="#fff" /></Svg>
          </button>
          <button type="button" aria-label="Maximize dialog" disabled className="flex size-5 items-center justify-center rounded-[3px] border border-[#8ea3ee] bg-[#5a77e0]">
            <Svg><path d="M3 4h10v9H3zM3 5h10" stroke="#8299ea" strokeWidth="1.500" /></Svg>
          </button>
          <button type="button" aria-label="Close dialog" className="flex size-5 items-center justify-center rounded-[3px] border border-[#d9c3dc] bg-linear-to-br from-[#c4808c] to-[#a8505c]">
            <Svg><path d="M3 3l10 10M13 3L3 13" stroke="#fff" strokeWidth="2.200" /></Svg>
          </button>
        </div>
      </div>
      <div className="bg-[#ece9d8] pt-px pr-1 pb-1 pl-2">
        <div className="grid grid-cols-[160px_1fr] gap-x-2 gap-y-0.5">
          <fieldset className={`${group} row-span-2 flex h-[222px] flex-col pb-[3px]`}>
            <legend className={legend}>Dosyaların bulunduğu yer</legend>
            <div className={`mt-[3px] grid h-5 shrink-0 items-center ${sunken}`}>
              <select aria-label="Drive" className="col-start-1 row-start-1 h-full w-full appearance-none bg-transparent pl-[25px] text-[11px] leading-4">
                <option>e: [New Volume]</option>
              </select>
              <svg viewBox="0 0 17 9" className="pointer-events-none col-start-1 row-start-1 ml-1 h-[9px] w-[17px]" aria-hidden="true">
                <path d="M1 3l3-2h11l1 1v4l-3 2H2L1 7z" fill="#b9b9b9" stroke="#333" />
                <path d="M2 3.500h11M3 5.500h9" stroke="#fff" />
              </svg>
              <span className="pointer-events-none col-start-1 row-start-1 flex h-[17px] w-4 items-center justify-center justify-self-end border border-t-white border-r-[#716f64] border-b-[#716f64] border-l-white bg-[#ece9d8]">
                <svg viewBox="0 0 7 4" className="h-1 w-[7px]" aria-hidden="true"><path d="M0 0h7L3.500 4z" fill="#000" /></svg>
              </span>
            </div>
            <ul role="listbox" aria-label="Folders" className={`mt-1 flex-1 text-[11px] leading-4 ${sunken}`}>
              <li role="option" aria-selected="false" className="flex h-4 items-center gap-[3px] pl-[3px]"><Folder />e:\</li>
              <li role="option" aria-selected="false" className="flex h-4 items-center gap-[3px] pl-[6px]"><Folder />Kam Çizim</li>
              <li role="option" aria-selected="true" className="flex h-4 items-center gap-[3px] bg-[#316ac5] pl-[9px] text-white"><Folder />kamçizimi</li>
            </ul>
          </fieldset>
          <fieldset className={`${group} flex h-[109px] flex-col pb-2`}>
            <legend className={legend}>Excel dosyaları</legend>
            <ul role="listbox" aria-label="Excel dosyaları" className="mt-px h-[87px] border border-black bg-white text-[11px] leading-[14px]">
              <li role="option" aria-selected="true" className="h-[14px] bg-[#316ac5] pl-[2px] text-white">kam profili.xls</li>
            </ul>
          </fieldset>
          <fieldset className={`${group} flex h-[111px] flex-col pb-2`}>
            <legend className={legend}>Dosyadaki sayfalar</legend>
            <ul role="listbox" aria-label="Dosyadaki sayfalar" className={`mt-[2px] h-[87px] text-[11px] leading-[14px] ${sunken}`}>
              {["Sayfa1$", "Sayfa2$", "Sayfa3$"].map((s) => (
                <li key={s} role="option" aria-selected={s === sheet} onClick={() => setSheet(s)} className={`h-[14px] pl-[3px] ${s === sheet ? "bg-[#316ac5] text-white" : ""}`}>{s}</li>
              ))}
            </ul>
          </fieldset>
          <fieldset className={`${group} h-[38px]`}>
            <legend className={legend}>Kam Tipi</legend>
            <div className="flex items-center gap-3 pt-[2px] pl-0.5 text-[11px] leading-4">
              {[["duz", "Düz Uç"], ["yuvarlak", "Yuvarlak Uç"]].map(([id, text]) => (
                <label key={id} className="flex items-center gap-[5px] whitespace-nowrap">
                  <input
                    type="radio"
                    name="kam-tipi"
                    checked={tip === id}
                    onChange={() => setTip(id)}
                    className="size-[11px] appearance-none rounded-full border border-t-[#716f64] border-r-[#e8e6dc] border-b-[#e8e6dc] border-l-[#716f64] bg-white checked:bg-[radial-gradient(#000_2px,#fff_3px)]"
                  />
                  {text}
                </label>
              ))}
            </div>
          </fieldset>
          <fieldset className={`${group} h-[38px]`}>
            <legend className={legend}>Extrude ayarı</legend>
            <div className="flex items-center justify-between pt-[3px] text-[11px]">
              <label htmlFor="kalinlik">Kalınlık:</label>
              <input id="kalinlik" type="text" defaultValue="20" className={`h-[18px] w-[72px] pl-0.5 text-[11px] leading-4 ${sunken}`} />
            </div>
          </fieldset>
        </div>
        <button type="button" className="mt-[3px] mr-[89px] ml-auto block h-[25px] w-[129px] border border-black text-[11px] leading-4 shadow-[inset_1px_1px_0_#fff,inset_-1px_-1px_0_#716f64,inset_-2px_-2px_0_#aca899]">
          <span className="underline">Ç</span>iz
        </button>
      </div>
    </section>
  );
}

function SheetTab({ name, active, width }: { name: string; active?: boolean; width: string }) {
  return (
    <button type="button" role="tab" aria-selected={!!active} className={`-ml-[5px] grid h-[19px] items-center justify-items-center ${width}`}>
      <svg viewBox="0 0 54 19" preserveAspectRatio="none" className="col-start-1 row-start-1 h-full w-full" aria-hidden="true">
        <path d="M0 0l6 18h42l6-18z" fill={active ? "#000" : "#f3f1e6"} />
        <path d="M0 0l6 18.500h42l6-18.500" fill="none" stroke="#000" strokeWidth="1.300" />
      </svg>
      <span className={`col-start-1 row-start-1 text-[10px] leading-4 ${active ? "text-white" : "text-black"}`}>{name}</span>
    </button>
  );
}

function LayoutBar() {
  return (
    <div className="flex h-[22px] shrink-0 items-start border-b-2 border-b-white">
      <div className="flex pl-px">
        {["M3 2v8M10 2v8L5 6z", "M8 2v8L3 6z", "M4 2v8l5-4z", "M10 2v8M3 2v8l5-4z"].map((d, i) => (
          <button key={d} type="button" aria-label={["First tab", "Previous tab", "Next tab", "Last tab"][i]} className="flex h-[19px] w-[18px] items-center justify-center border-r border-b border-[#aca899] bg-[#f3f1e6]">
            <svg viewBox="0 0 12 12" className="size-3" aria-hidden="true"><path d={d} fill="#000" stroke="#000" /></svg>
          </button>
        ))}
      </div>
      <div role="tablist" className="flex pl-2">
        <SheetTab name="Model" active width="w-[47px]" />
        <SheetTab name="Layout1" width="w-[56px]" />
        <SheetTab name="Layout2" width="w-[56px]" />
      </div>
      <div className="flex-1" />
      <div className="flex w-[323px] items-center pt-0.5">
        <div className="mr-[2px] h-4 w-[6px] rounded-xs border border-[#c9c6b6] bg-[#f3f1e6]" />
        <ScrollButton dir="left" />
        <div className="flex h-[17px] flex-1 items-center bg-linear-to-b from-[#f1efe8] to-[#fdfdfb] pl-[187px]"><Thumb /></div>
        <ScrollButton dir="right" />
      </div>
      <div className="w-[18px]" />
    </div>
  );
}

/* ---------- command line and status ---------- */

function CommandDock() {
  return (
    <section aria-label="Command line" className="mt-[3px] flex shrink-0 border-t-2 border-t-[#4a4840] pt-1 pr-[6px] pb-[3px] pl-[6px]">
      <div className="mr-1 flex py-0.5"><Grip /></div>
      <div className="min-w-0 flex-1 border-t-2 border-l border-l-[#716f64] border-t-black">
        <div className="flex bg-white">
          <pre className="flex-1 overflow-hidden pt-px font-['DejaVu_Sans_Mono',monospace] text-[13px] leading-[15px] font-bold whitespace-pre">{"Enter option [2D wireframe/3D\nwireframe/Hidden/Flat/Gouraud/fLat+edges/gOuraud+edges] <Flat>: _g"}</pre>
          <div className="flex h-8 flex-col items-center justify-between bg-[#f6f5f0] px-px">
            <ScrollButton dir="up" />
            <ScrollButton dir="down" />
          </div>
        </div>
        <div className="flex h-[19px] items-center border-t border-t-[#aca899]">
          <label htmlFor="command" className="flex h-full flex-none items-center bg-white font-['DejaVu_Sans_Mono',monospace] text-[13px] leading-[15px] font-bold">Command:</label>
          <input id="command" type="text" className="h-full min-w-0 flex-1 bg-white font-['DejaVu_Sans_Mono',monospace] text-[13px] font-bold outline-none" />
          <div className="flex w-[70px] items-center pl-1">
            <ScrollButton dir="left" />
            <div className="flex flex-1 bg-[#f6f5f0] pl-[2px]"><Thumb /></div>
            <ScrollButton dir="right" />
          </div>
          <div className="w-[17px]" />
        </div>
      </div>
    </section>
  );
}

function StatusBar() {
  const toggles: [string, boolean][] = [["SNAP", false], ["GRID", false], ["ORTHO", false], ["POLAR", false], ["OSNAP", true], ["OTRACK", false], ["DYN", false], ["LWT", false], ["MODEL", true]];
  return (
    <footer className="mt-px flex h-[22px] shrink-0 items-center gap-1 border-t-2 border-t-[#9c998a] bg-linear-to-b from-[#e2dfcc] to-[#ece9d8] pl-[5px] text-[11px] leading-4">
      <output className="h-[18px] w-[238px] border border-t-[#aca899] border-r-white border-b-white border-l-[#aca899] pl-px text-[11px] whitespace-pre">{"28.3118,  25.2870, 0.0000"}</output>
      {toggles.map(([name, on]) => (
        <button
          key={name}
          type="button"
          aria-pressed={on}
          className={`h-[18px] border ${on ? "border-t-black border-r-white border-b-white border-l-black" : "border-t-white border-r-[#aca899] border-b-[#aca899] border-l-white"}`}
        >
          {name}
        </button>
      ))}
      <div className="flex-1" />
      <div className="flex h-[18px] items-center gap-[3px] border border-t-[#aca899] border-r-white border-b-white border-l-[#aca899] px-1">
        <Svg>
          <path d="M2 2l6 8 4-6-3-4zM5 10l-3 5h6" fill="#b8c8d8" stroke="#3a5675" />
          <path d="M10 5l6 10H5z" fill="#ffe22e" stroke="#a58a13" strokeWidth=".8" />
          <path d="M10.500 8v4M10.500 13v1.500" stroke="#111" strokeWidth="1.400" />
        </Svg>
        <Svg className="size-[17px]">
          <path d="M9 7V4c0-4 6-4 6 0v2" stroke="#8a8b1e" strokeWidth="1.900" />
          <path d="M1 7h10v8H1z" fill="#e4d840" stroke="#4d4b10" />
          <path d="M2 9.500h8M2 12h8" stroke="#8a8222" /><path d="M6 9v4" stroke="#111" strokeWidth="1.500" />
        </Svg>
      </div>
      <button type="button" aria-label="Status bar menu" className="-ml-1 flex h-full w-[14px] items-end justify-end pb-1">
        <svg viewBox="0 0 8 4" className="h-1 w-2" aria-hidden="true"><path d="M0 0h8L4 4z" fill="#000" /></svg>
      </button>
    </footer>
  );
}

export default function App() {
  return (
    <div className="flex h-screen w-full flex-col overflow-hidden bg-[#ece9d8] font-['Liberation_Sans',Arial,sans-serif] text-black">
      <Defs />
      <TitleBar />
      <div className="flex min-h-0 flex-1 flex-col border-r-2 border-r-[#3d84e0]">
        <MenuBar />
        <StandardRow />
        <LayerRow />
        <main className="flex min-h-0 flex-1 border-t-2 border-t-[#8d8a7c]">
          <ToolColumn groups={[draw, view3d]} className="w-[23px] border-l border-l-white" />
          <div className="flex min-w-0 flex-1 flex-col border-l-4 border-l-[#aca899]">
            <div className="flex min-h-0 flex-1">
              <Canvas />
              <div className="flex w-[17px] shrink-0 flex-col items-center bg-linear-to-r from-[#f1efe8] to-[#fdfdfb] pt-px">
                <ScrollButton dir="up" />
                <div className="flex-1" />
                <Thumb vertical />
                <div className="h-[3px]" />
                <ScrollButton dir="down" />
              </div>
            </div>
            <LayoutBar />
          </div>
          <ToolColumn groups={[modify, views]} className="w-[26px] border-l-2 border-l-white pl-0.5" />
        </main>
        <CommandDock />
        <StatusBar />
      </div>
    </div>
  );
}
